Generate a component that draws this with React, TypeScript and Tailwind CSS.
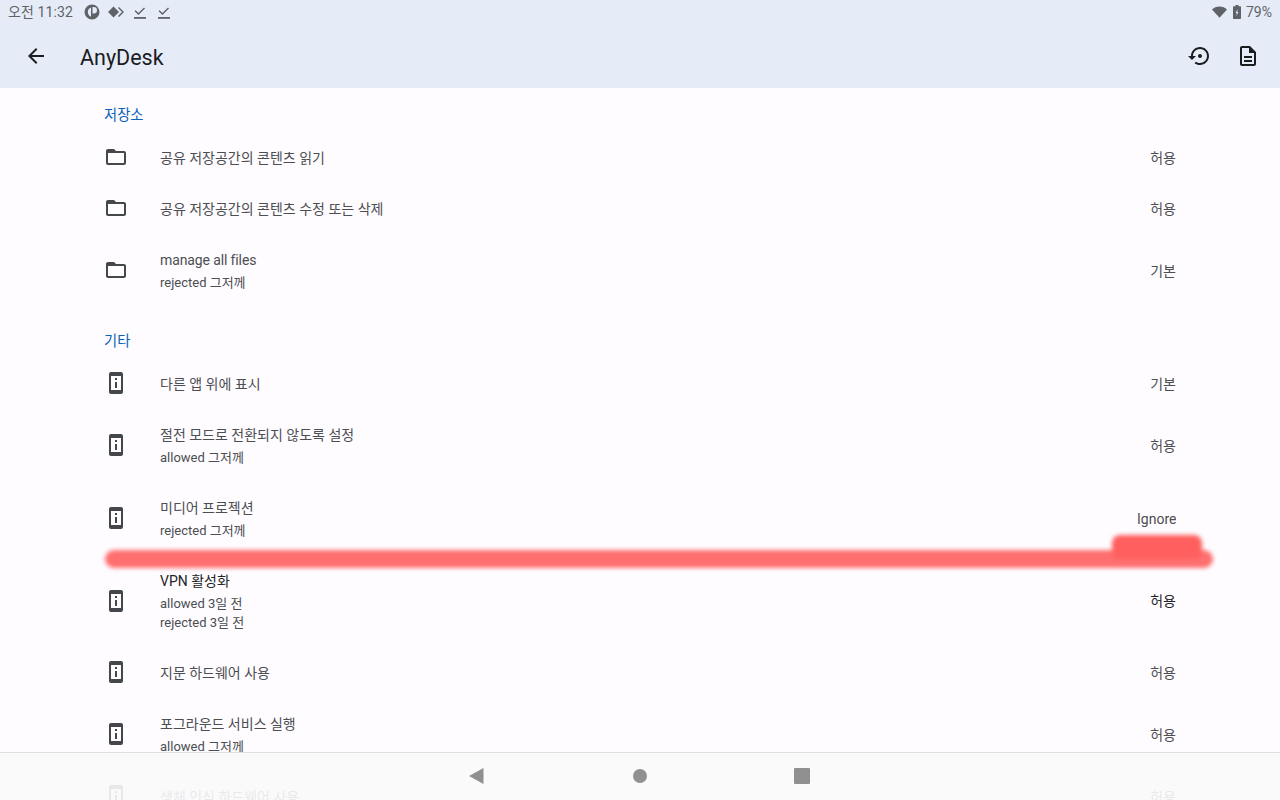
import React from 'react';

const FONT = "font-['Roboto','Noto_Sans_CJK_KR',sans-serif]";

const FOLDER = 'M20 6h-8l-2-2H4c-1.1 0-1.99.9-1.99 2L2 18c0 1.1.9 2 2 2h16c1.1 0 2-.9 2-2V8c0-1.1-.9-2-2-2zm0 12H4V8h16v10z';
const DEVICE_INFO = 'M13 7h-2v2h2V7zm0 4h-2v6h2v-6zm4-9.99L7 1c-1.1 0-2 .9-2 2v18c0 1.1.9 2 2 2h10c1.1 0 2-.9 2-2V3c0-1.1-.9-1.99-2-1.99zM17 19H7V5h10v14z';

type Perm = { title: string; subs?: string[]; value: string; icon: string; h: string; dark?: boolean; up?: boolean; tight?: boolean };

const storage: Perm[] = [
  { title: '공유 저장공간의 콘텐츠 읽기', value: '허용', icon: FOLDER, h: 'h-[51px]', up: true },
  { title: '공유 저장공간의 콘텐츠 수정 또는 삭제', value: '허용', icon: FOLDER, h: 'h-[51px]', up: true },
  { title: 'manage all files', subs: ['rejected 그저께'], value: '기본', icon: FOLDER, h: 'h-[72px]', tight: true },
];

const other: Perm[] = [
  { title: '다른 앱 위에 표시', value: '기본', icon: DEVICE_INFO, h: 'h-[51px]', up: true },
  { title: '절전 모드로 전환되지 않도록 설정', subs: ['allowed 그저께'], value: '허용', icon: DEVICE_INFO, h: 'h-[72px]' },
  { title: '미디어 프로젝션', subs: ['rejected 그저께'], value: 'Ignore', icon: DEVICE_INFO, h: 'h-[73px]' },
  { title: 'VPN 활성화', subs: ['allowed 3일 전', 'rejected 3일 전'], value: '허용', icon: DEVICE_INFO, h: 'h-[92px]', dark: true },
  { title: '지문 하드웨어 사용', value: '허용', icon: DEVICE_INFO, h: 'h-[51px]' },
  { title: '포그라운드 서비스 실행', subs: ['allowed 그저께'], value: '허용', icon: DEVICE_INFO, h: 'h-[74px]' },
  { title: '생체 인식 하드웨어 사용', value: '허용', icon: DEVICE_INFO, h: 'h-[51px]', up: true },
];

function Icon({ d, className }: { d: string; className?: string }) {
  return (
    <svg viewBox="0 0 24 24" className={className} fill="currentColor">
      <path d={d} />
    </svg>
  );
}

function Row({ p }: { p: Perm }) {
  return (
    <div className={`flex items-center pl-[104px] pr-[104px] ${p.h} ${p.up ? 'pb-[2px]' : ''}`}>
      <Icon d={p.icon} className={`w-6 h-6 text-[#44474c] shrink-0 ${p.dark ? '' : '-mt-[2px]'}`} />
      <div className="flex-1 ml-8 min-w-0">
        <div className={`text-[14px] leading-[20px] ${p.dark ? 'text-[#222427]' : 'text-[#4c4e52]'} ${p.tight ? 'tracking-[-0.12px]' : ''}`}>{p.title}</div>
        {p.subs && (
          <div className="mt-[3px]">
            {p.subs.map((s) => (
              <div key={s} className="text-[13px] leading-[19px] text-[#4c4e52]">{s}</div>
            ))}
          </div>
        )}
      </div>
      <div className={`text-[14px] leading-[20px] max-w-[39px] overflow-hidden whitespace-nowrap ${p.dark ? 'text-[#222427]' : 'text-[#4c4e52]'}`}>{p.value}</div>
    </div>
  );
}

function StatusBar() {
  return (
    <div className="h-6 flex items-center justify-between pl-2 pr-2 text-[#5f6368]">
      <div className="flex items-center">
        <span className="text-[14px] leading-[20px] tracking-[0.1px]">오전 11:32</span>
        <svg viewBox="0 0 16 16" className="w-4 h-4 ml-[11px]" fill="currentColor">
          <path fillRule="evenodd" d="M8 .5a7.5 7.5 0 1 0 0 15 7.5 7.5 0 0 0 0-15zM8.5 3h1.2a3.3 3.3 0 0 1 0 6.6H8.5V3zM7 3.4v9.3A5 5 0 0 1 7 3.4z" />
        </svg>
        <svg viewBox="0 0 16 12" className="w-4 h-3 ml-[8px]" fill="currentColor">
          <path d="M5.5 .5 11 6 5.5 11.5 0 6z" />
          <path d="M11 1 16 6 11 11 10 10 14 6 10 2z" />
        </svg>
        <svg viewBox="0 0 12 14" className="w-3 h-[14px] ml-[10px]" fill="currentColor">
          <path d="M1.6 5.2 4.4 8l5.6-5.4 1 1L4.4 10 .6 6.2z" />
          <rect x="0" y="12" width="12" height="1.8" />
        </svg>
        <svg viewBox="0 0 12 14" className="w-3 h-[14px] ml-[12px]" fill="currentColor">
          <path d="M1.6 5.2 4.4 8l5.6-5.4 1 1L4.4 10 .6 6.2z" />
          <rect x="0" y="12" width="12" height="1.8" />
        </svg>
      </div>
      <div className="flex items-center">
        <svg viewBox="0 0 16 12" className="w-[15px] h-[12px]" fill="currentColor">
          <path d="M8 12 0 3.2C2 1.2 4.8 0 8 0s6 1.2 8 3.2z" />
        </svg>
        <svg viewBox="0 0 8 14" className="w-2 h-[14px] ml-[6px]" fill="currentColor">
          <path fillRule="evenodd" d="M2.5 0h3v1.2H7c.6 0 1 .4 1 1V13c0 .6-.4 1-1 1H1c-.6 0-1-.4-1-1V2.200c0-.6.4-1 1-1h1.500zM4.600 4 2.600 8h1.200l-.4 3 2-4H4.200z" />
        </svg>
        <span className="text-[14px] leading-[20px] ml-[5px]">79%</span>
      </div>
    </div>
  );
}

export default function App() {
  return (
    <div className={`relative w-[1280px] h-[800px] overflow-hidden bg-[#fefcff] ${FONT}`}>
      <div className="h-[88px] bg-[#e6ecf7]">
        <StatusBar />
        <div className="h-16 flex items-center pl-6 pr-5 text-[#1b1c1f]">
          <Icon d="M20 11H7.830l5.590-5.590L12 4l-8 8 8 8 1.410-1.410L7.830 13H20v-2z" className="w-6 h-6" />
          <div className="ml-8 mt-[3px] text-[21.5px] leading-[28px] flex-1">AnyDesk</div>
          <Icon d="M14 12c0-1.100-.9-2-2-2s-2 .9-2 2 .9 2 2 2 2-.9 2-2zm-2-9c-4.970 0-9 4.030-9 9H0l4 4 4-4H5c0-3.870 3.130-7 7-7s7 3.130 7 7-3.130 7-7 7c-1.510 0-2.910-.49-4.060-1.300l-1.420 1.440C8.040 20.300 9.940 21 12 21c4.970 0 9-4.030 9-9s-4.030-9-9-9z" className="w-6 h-6" />
          <Icon d="M8 16h8v2H8zm0-4h8v2H8zm6-10H6c-1.100 0-2 .9-2 2v16c0 1.100.89 2 1.990 2H18c1.100 0 2-.9 2-2V8l-6-6zm4 18H6V4h7v5h5v11z" className="w-6 h-6 ml-6" />
        </div>
      </div>

      <div className="pt-[9px] h-[45px] pl-[104px] text-[14.3px] leading-[37px] text-[#0a62b8]">
        <div className="h-[36px]">저장소</div>
      </div>
      {storage.map((p) => <Row key={p.title} p={p} />)}

      <div className="mt-4 h-9 pl-[104px] text-[14.3px] leading-[37px] text-[#0a62b8]">기타</div>
      {other.map((p) => <Row key={p.title} p={p} />)}

      {/* red scribble over the screenshot */}
      <div className="absolute left-[105px] top-[550px] w-[1108px] h-[18px] rounded-full bg-[#ff6f6f] blur-[2px]" />
      <div className="absolute left-[1112px] top-[535px] w-[90px] h-[24px] rounded-lg bg-[#ff5f5f] blur-[2px]" />

      {/* translucent nav bar */}
      <div className="absolute left-0 right-0 bottom-0 h-12 bg-[#f9f9fb]/90 border-t border-[#dedfe1]">
        <svg viewBox="0 0 16 16" className="w-4 h-4 absolute left-[469px] top-[15px]" fill="#909090">
          <path d="M0 8 14.500 0v16z" />
        </svg>
        <div className="w-[14px] h-[14px] rounded-full bg-[#909090] absolute left-[633px] top-[16px]" />
        <div className="w-[16px] h-[16px] rounded-[1px] bg-[#909090] absolute left-[794px] top-[15px]" />
      </div>
    </div>
  );
}
